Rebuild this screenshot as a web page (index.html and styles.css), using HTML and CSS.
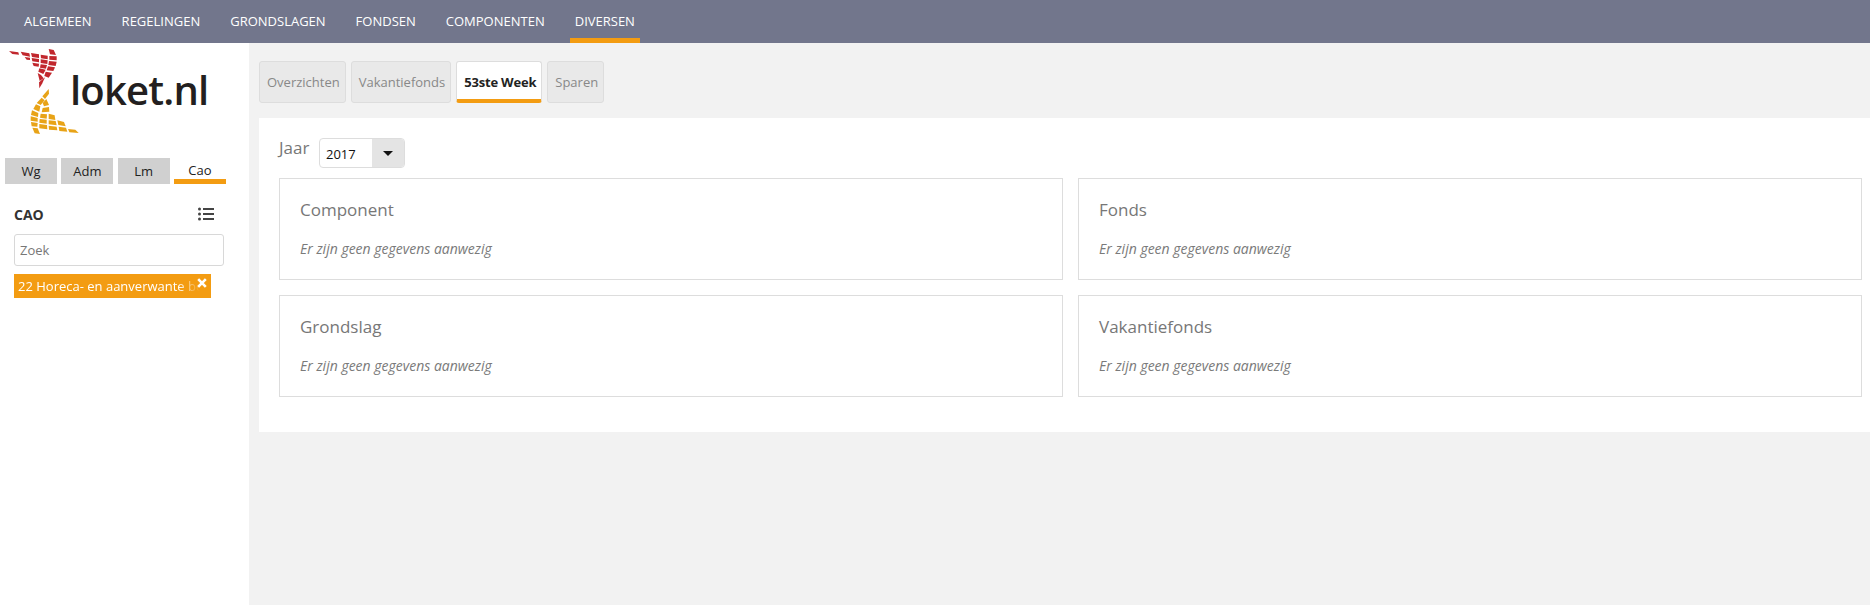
FILE: index.html
```html
<!DOCTYPE html>
<html lang="nl">
<head>
    <meta charset="UTF-8">
    <title>Loket.nl</title>
    <link rel="stylesheet" href="styles.css">
</head>
<body>
    <nav class="topnav">
        <a class="topnav-item">Algemeen</a>
        <a class="topnav-item">Regelingen</a>
        <a class="topnav-item">Grondslagen</a>
        <a class="topnav-item">Fondsen</a>
        <a class="topnav-item">Componenten</a>
        <a class="topnav-item active">Diversen</a>
    </nav>
    <div class="page">
        <aside class="sidebar">
            <div class="logo">
                <svg class="logo-mark" width="80" height="88" viewBox="0 0 240 264">
                    <g fill="#c1272d">
                        <polygon points="27,6 55,10 57,17 37,15"/>
                        <polygon points="62,8 88,13 90,23 68,19"/>
                        <polygon points="93,12 117,16 117,27 96,24"/>
                        <polygon points="122,17 143,20 143,31 123,28"/>
                        <polygon points="146,0 161,3 168,18 150,16"/>
                        <polygon points="74,24 90,26 90,33 80,32"/>
                        <polygon points="95,27 117,30 117,40 97,37"/>
                        <polygon points="122,31 143,34 142,45 122,42"/>
                        <polygon points="148,21 170,22 170,34 148,32"/>
                        <polygon points="97,41 117,44 116,53 101,51"/>
                        <polygon points="122,46 141,48 138,59 120,56"/>
                        <polygon points="147,36 170,38 167,51 145,48"/>
                        <polygon points="118,58 137,62 130,75 115,68"/>
                        <polygon points="144,52 165,55 160,66 140,64"/>
                        <polygon points="113,72 123,78 131,88 119,96"/>
                        <polygon points="137,68 156,71 146,86 133,81"/>
                        <polygon points="117,100 135,85 127,103 118,118"/>
                    </g>
                    <g fill="#e8a317">
                        <polygon points="146,120 147,134 135,150 127,142"/>
                        <polygon points="125,146 134,154 122,168 110,162"/>
                        <polygon points="139,150 147,168 132,172 128,162"/>
                        <polygon points="108,166 121,172 118,188 100,180"/>
                        <polygon points="128,177 147,174 148,188 125,190"/>
                        <polygon points="96,184 115,192 114,204 93,198"/>
                        <polygon points="122,194 141,196 140,209 120,206"/>
                        <polygon points="146,194 164,199 166,213 146,210"/>
                        <polygon points="92,202 113,207 113,218 92,215"/>
                        <polygon points="119,210 140,212 140,224 118,221"/>
                        <polygon points="146,214 167,216 170,229 146,226"/>
                        <polygon points="172,214 192,219 197,232 175,228"/>
                        <polygon points="93,219 113,222 112,233 95,232"/>
                        <polygon points="118,225 141,228 142,241 118,238"/>
                        <polygon points="146,230 170,233 172,244 147,242"/>
                        <polygon points="176,233 198,236 202,248 178,246"/>
                        <polygon points="97,236 113,238 120,255 104,253"/>
                        <polygon points="204,240 226,242 236,252 208,250"/>
                    </g>
                </svg>
                <span class="logo-text">loket.nl</span>
            </div>
            <div class="side-tabs">
                <a class="side-tab">Wg</a>
                <a class="side-tab">Adm</a>
                <a class="side-tab">Lm</a>
                <a class="side-tab active">Cao</a>
            </div>
            <div class="side-head">
                <span>CAO</span>
                <svg width="16" height="14" viewBox="0 0 16 14">
                    <g fill="#444">
                        <circle cx="1.5" cy="2" r="1.5"/>
                        <circle cx="1.5" cy="7" r="1.5"/>
                        <circle cx="1.5" cy="12" r="1.5"/>
                        <rect x="5" y="1" width="11" height="2"/>
                        <rect x="5" y="6" width="11" height="2"/>
                        <rect x="5" y="11" width="11" height="2"/>
                    </g>
                </svg>
            </div>
            <input class="search" type="text" placeholder="Zoek">
            <div class="tag">
                <span class="tag-text">22 Horeca- en aanverwante bedrijf</span>
                <svg class="tag-close" width="10" height="10" viewBox="0 0 10 10">
                    <path d="M1.2 1.2 L8.8 8.8 M8.8 1.2 L1.2 8.8" stroke="#fff" stroke-width="2.6" fill="none"/>
                </svg>
            </div>
        </aside>
        <main class="content">
            <div class="tabs">
                <a class="tab">Overzichten</a>
                <a class="tab">Vakantiefonds</a>
                <a class="tab active">53ste Week</a>
                <a class="tab">Sparen</a>
            </div>
            <section class="panel">
                <div class="year-row">
                    <label class="year-label">Jaar</label>
                    <div class="year-select">
                        <span class="year-value">2017</span>
                        <span class="year-btn"><i class="caret"></i></span>
                    </div>
                </div>
                <div class="cards">
                    <div class="card">
                        <h3>Component</h3>
                        <p>Er zijn geen gegevens aanwezig</p>
                    </div>
                    <div class="card">
                        <h3>Fonds</h3>
                        <p>Er zijn geen gegevens aanwezig</p>
                    </div>
                    <div class="card">
                        <h3>Grondslag</h3>
                        <p>Er zijn geen gegevens aanwezig</p>
                    </div>
                    <div class="card">
                        <h3>Vakantiefonds</h3>
                        <p>Er zijn geen gegevens aanwezig</p>
                    </div>
                </div>
            </section>
        </main>
    </div>
</body>
</html>
```

FILE: styles.css
```css
* {
    box-sizing: border-box;
}
html, body {
    height: 100%;
}
body {
    margin: 0;
    display: flex;
    flex-direction: column;
    overflow: hidden;
    font-family: "Open Sans", sans-serif;
    font-size: 13px;
    color: #333;
    background-color: #f2f2f2;
}
.topnav {
    display: flex;
    gap: 20px;
    height: 43px;
    padding-left: 19px;
    background-color: #72768c;
}
.topnav-item {
    padding: 0 5px;
    line-height: 43px;
    text-transform: uppercase;
    color: #fff;
}
.topnav-item.active {
    border-bottom: 5px solid #f39c12;
}
.page {
    display: flex;
    flex: 1;
}
.sidebar {
    width: 249px;
    padding-top: 6px;
    background-color: #fff;
}
.logo {
    display: flex;
    align-items: flex-start;
    height: 109px;
}
.logo-mark {
    flex: none;
}
.logo-text {
    margin: 16px 0 0 -10px;
    font-size: 40px;
    font-weight: 600;
    line-height: 50px;
    letter-spacing: -0.8px;
    color: #231f20;
}
.side-tabs {
    display: flex;
    gap: 4.34px;
    padding-left: 5px;
}
.side-tab {
    width: 52px;
    height: 26px;
    line-height: 26px;
    text-align: center;
    color: #222;
    background-color: #d0d0d0;
}
.side-tab.active {
    line-height: 24px;
    background-color: #fff;
    border-bottom: 5px solid #f39c12;
}
.side-head {
    display: flex;
    justify-content: space-between;
    align-items: center;
    height: 30px;
    margin-top: 15px;
    padding: 0 35px 0 14px;
    font-size: 14px;
    font-weight: 700;
}
.search {
    display: block;
    width: 210px;
    height: 32px;
    margin: 5px 0 0 14px;
    padding: 0 5px;
    border: 1px solid #d8d8d8;
    border-radius: 3px;
    font: 13px "Open Sans", sans-serif;
}
.search::placeholder {
    color: #777;
    opacity: 1;
}
.tag {
    position: relative;
    width: 197px;
    height: 24px;
    margin: 8px 0 0 14px;
    padding-left: 4px;
    line-height: 24px;
    color: #fff;
    background-color: #f39c12;
}
.tag-text {
    display: block;
    width: 184px;
    overflow: hidden;
    white-space: nowrap;
    -webkit-mask-image: linear-gradient(to right, #000 160px, transparent 182px);
    mask-image: linear-gradient(to right, #000 160px, transparent 182px);
}
.tag-close {
    position: absolute;
    top: 4px;
    right: 4px;
}
.content {
    flex: 1;
    padding: 18px 0 0 10px;
}
.tabs {
    display: flex;
    gap: 5px;
}
.tab {
    height: 42px;
    padding: 0 5px 0 7px;
    line-height: 40px;
    color: #888;
    background-color: #e9e9e9;
    border: 1px solid #ddd;
    border-radius: 3px;
}
.tab.active {
    font-weight: 700;
    letter-spacing: -0.2px;
    color: #222;
    background-color: #fff;
    border-bottom: 4px solid #f39c12;
}
.panel {
    height: 314px;
    margin-top: 15px;
    padding: 20px 8px 0 20px;
    background-color: #fff;
}
.year-row {
    display: flex;
}
.year-label {
    width: 40px;
    font-size: 17px;
    line-height: 20px;
    color: #777;
}
.year-select {
    display: flex;
    width: 86px;
    height: 30px;
    border: 1px solid #ddd;
    border-radius: 4px;
    overflow: hidden;
}
.year-value {
    flex: 1;
    padding-left: 6px;
    line-height: 30px;
    color: #111;
}
.year-btn {
    display: flex;
    align-items: center;
    justify-content: center;
    width: 32px;
    background-color: #e4e4e4;
}
.caret {
    border-top: 5px solid #111;
    border-left: 5px solid transparent;
    border-right: 5px solid transparent;
}
.cards {
    display: grid;
    grid-template-columns: 1fr 1fr;
    gap: 15px;
    margin-top: 10px;
}
.card {
    height: 102px;
    padding: 19px 20px 0;
    border: 1px solid #ddd;
}
.card h3 {
    margin: 0;
    font-size: 17px;
    font-weight: 400;
    line-height: 24px;
    color: #777;
}
.card p {
    margin: 18px 0 0;
    font-size: 14px;
    font-style: italic;
    line-height: 17px;
    color: #7a7a7a;
}
```
